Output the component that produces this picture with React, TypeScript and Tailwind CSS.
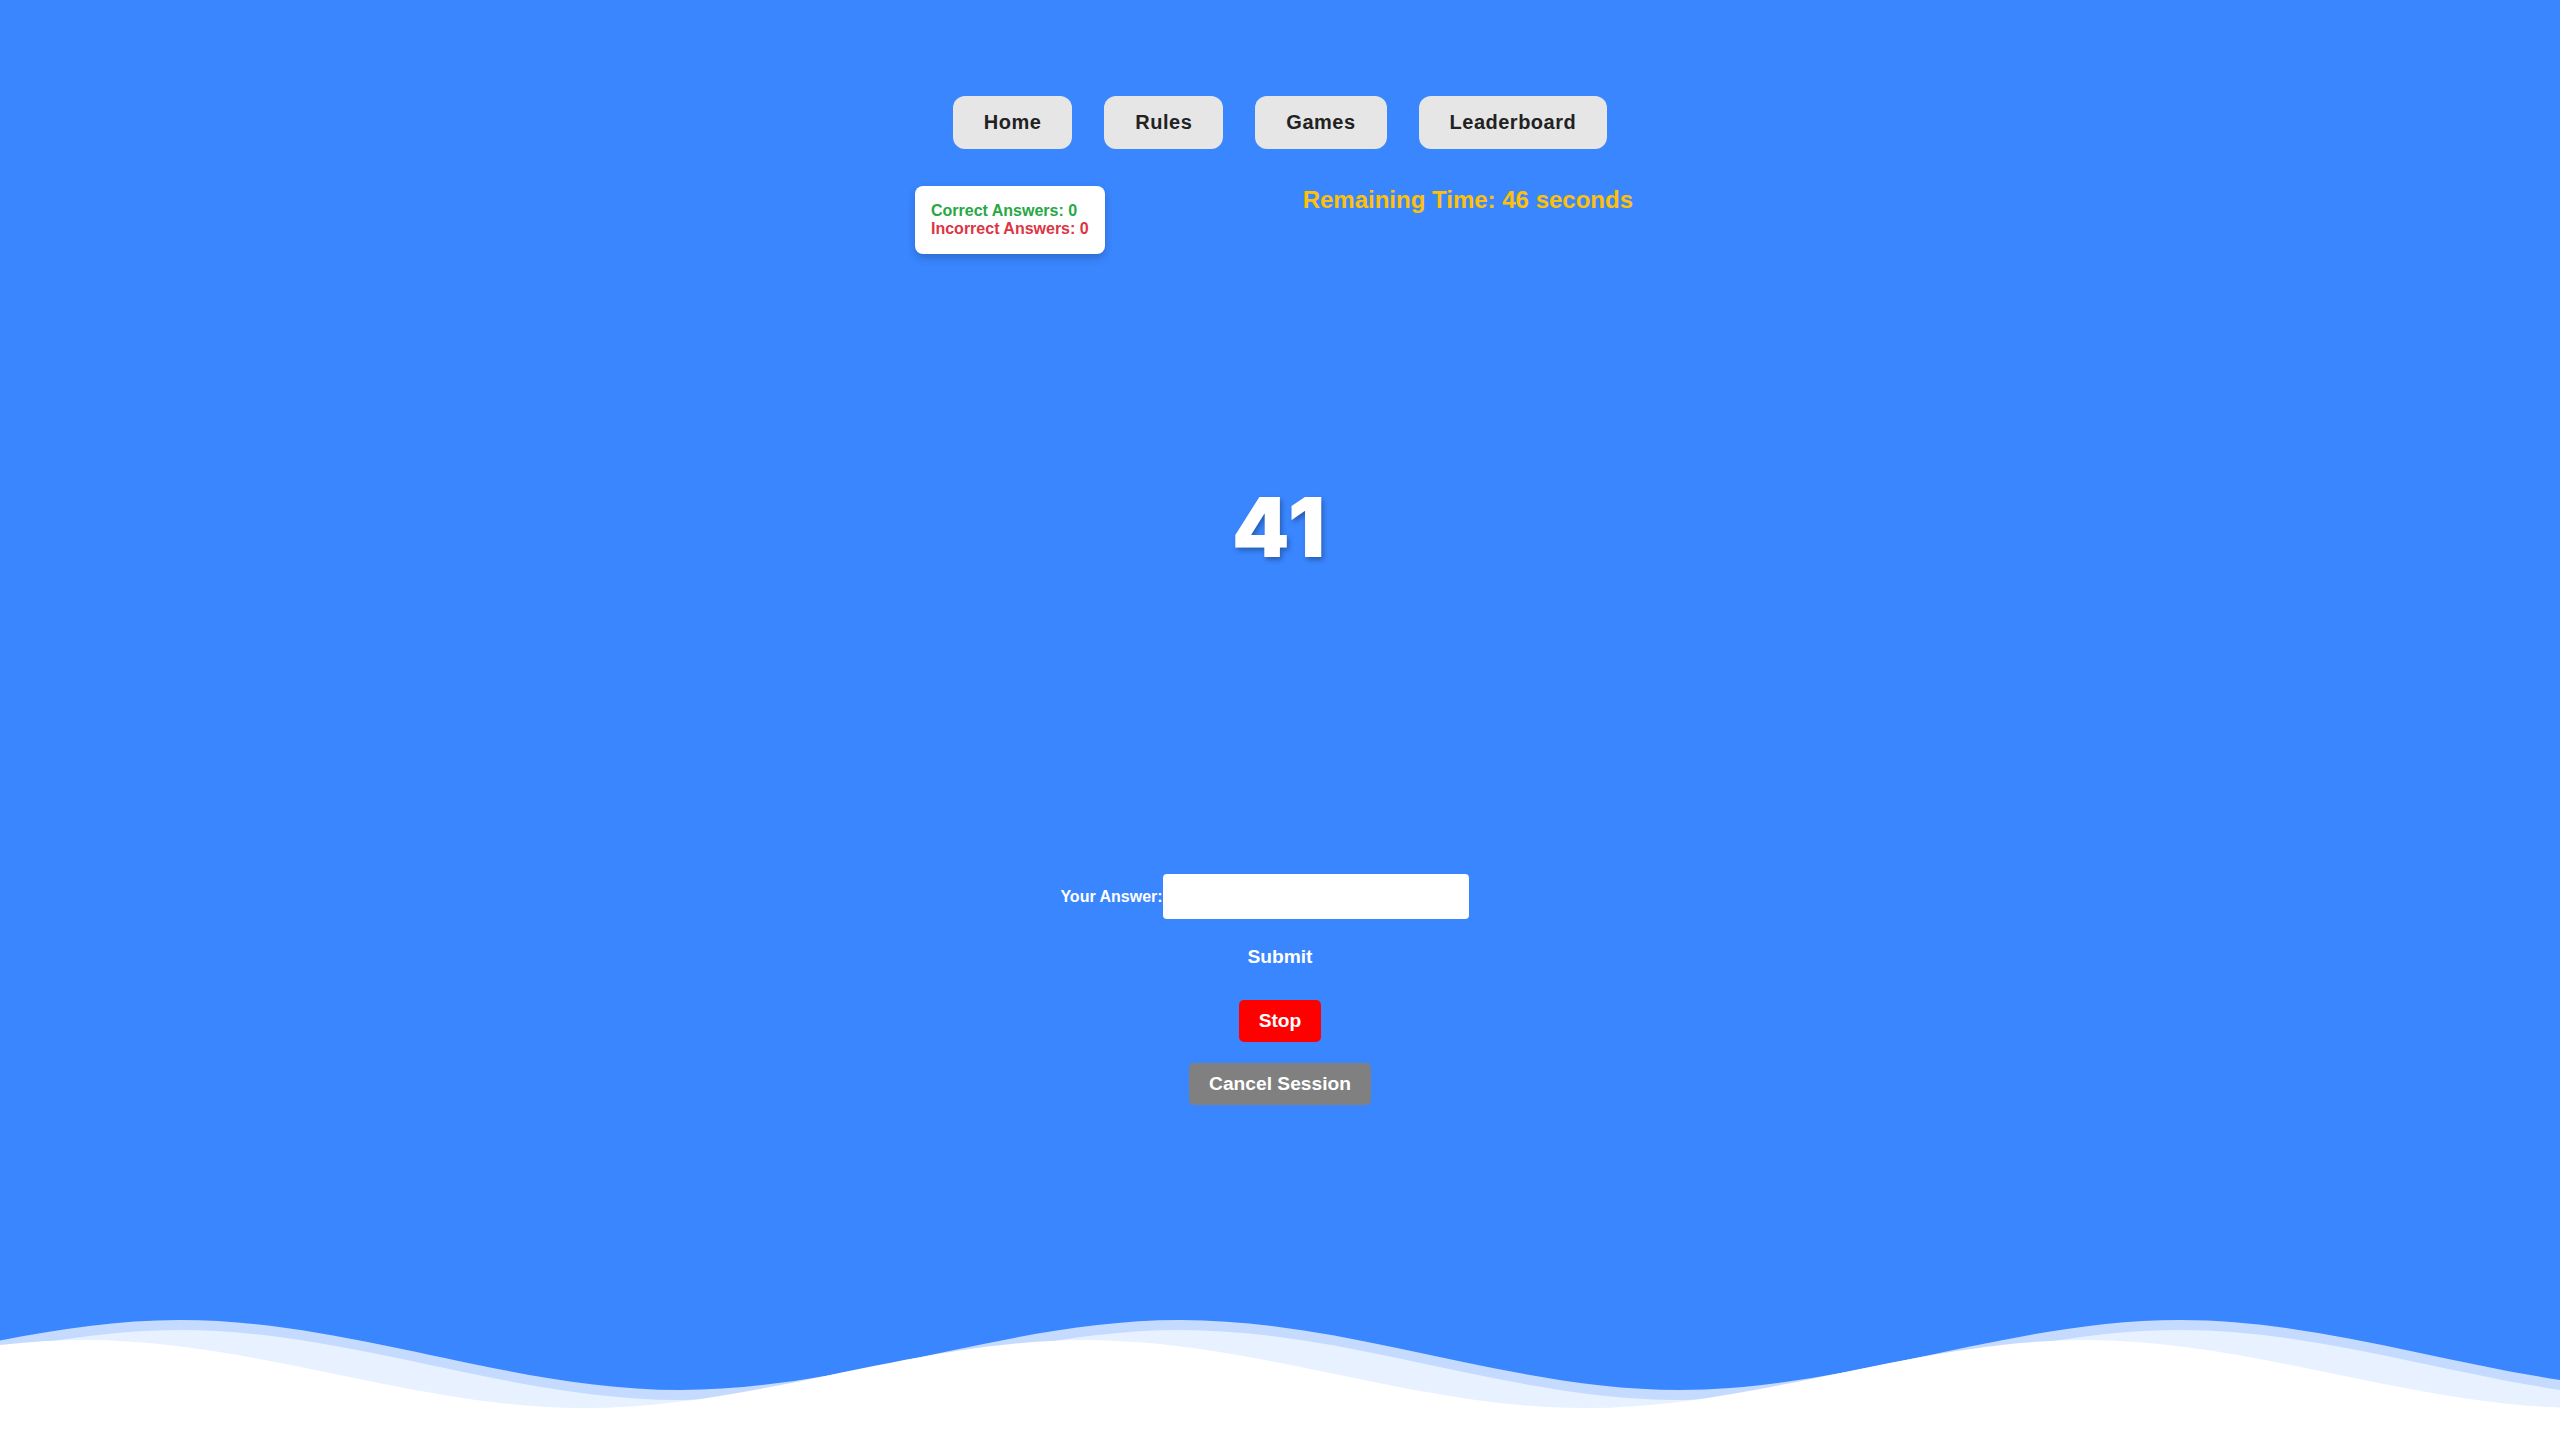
import React from "react";

function wavePath(crestX: number, crestY: number, amp: number, width: number, height: number): string {
  const period = 1000;
  let x0 = crestX;
  while (x0 > 0) x0 -= period;
  let d = `M${x0} ${crestY} c170 0 330 ${amp} 500 ${amp}`;
  let x = x0 + 500;
  let down = false;
  while (x < width + period) {
    d += down ? ` s330 ${amp} 500 ${amp}` : ` s330 ${-amp} 500 ${-amp}`;
    down = !down;
    x += 500;
  }
  d += ` V${height} H${x0} Z`;
  return d;
}

function Waves() {
  const W = 2560;
  const H = 130;
  return (
    <svg
      className="block w-full h-[130px] shrink-0"
      viewBox={`0 0 ${W} ${H}`}
      preserveAspectRatio="none"
      xmlns="http://www.w3.org/2000/svg"
    >
      <path d={wavePath(180, 10, 70, W, H)} fill="rgba(255,255,255,0.7)" />
      <path d={wavePath(180, 20, 70, W, H)} fill="rgba(255,255,255,0.6)" />
      <path d={wavePath(85, 30, 68, W, H)} fill="#ffffff" />
    </svg>
  );
}

const navItems = ["Home", "Rules", "Games", "Leaderboard"];

export default function App() {
  return (
    <div className="h-screen w-full overflow-hidden bg-[#3a86ff] flex flex-col leading-[normal] font-['Liberation_Sans',Arial,sans-serif]">
      <nav className="flex justify-center gap-[32px] pt-[96px]">
        {navItems.map((n) => (
          <button
            key={n}
            className="bg-[#e6e6e6] text-[#222222] font-bold text-[20px] leading-[23px] tracking-[0.5px] px-[31px] py-[15px] rounded-[12px]"
          >
            {n}
          </button>
        ))}
      </nav>

      <div className="mx-auto mt-[37px] w-[730px] pr-[12px] flex justify-between items-start">
        <div className="bg-white rounded-[8px] p-[16px] shadow-[0_4px_8px_rgba(0,0,0,0.2)] text-[16px] leading-[18px] font-bold">
          <div className="text-[#28a745]">Correct Answers: 0</div>
          <div className="text-[#dc3545]">Incorrect Answers: 0</div>
        </div>
        <div className="text-[#ffc107] text-[24px] leading-[28px] font-bold">Remaining Time: 46 seconds</div>
      </div>

      <div className="mt-[234px] text-center text-white text-[82px] leading-[80px] tracking-[3px] font-black font-['Inter',sans-serif] [text-shadow:2px_3px_5px_rgba(0,0,0,0.3)]">
        41
      </div>

      <div className="mt-[306px] flex justify-center items-center">
        <label className="text-white font-bold text-[16px] leading-[18px]">Your Answer:</label>
        <input className="w-[306px] h-[45px] bg-white rounded-[4px] mr-[31px] outline-none px-2" />
      </div>

      <div className="flex flex-col items-center">
        <button className="mt-[17px] text-white font-bold text-[19.2px] leading-[22px] px-[20px] py-[10px] bg-transparent">
          Submit
        </button>
        <button className="mt-[22px] text-white font-bold text-[19.2px] leading-[22px] px-[20px] py-[10px] bg-[#ff0000] rounded-[5px]">
          Stop
        </button>
        <button className="mt-[21px] text-white font-bold text-[19.2px] leading-[22px] px-[20px] py-[10px] bg-[#808080] rounded-[5px]">
          Cancel Session
        </button>
      </div>

      <div className="mt-auto">
        <Waves />
      </div>
    </div>
  );
}
